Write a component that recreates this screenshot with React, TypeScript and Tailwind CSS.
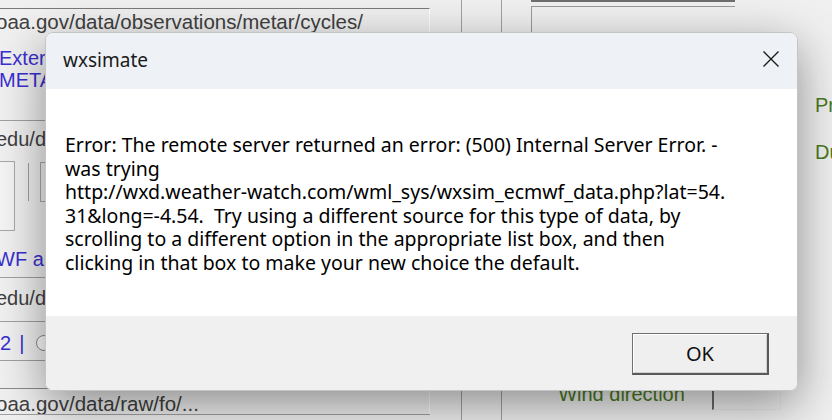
import React from "react";

function HLine({ className = "" }: { className?: string }) {
  return <div className={"h-px bg-[#a0a0a0] shrink-0 " + className} />;
}

export default function App() {
  const lines = [
    "Error: The remote server returned an error: (500) Internal Server Error. -",
    "was trying",
    "http://wxd.weather-watch.com/wml_sys/wxsim_ecmwf_data.php?lat=54.",
    "31&long=-4.54.  Try using a different source for this type of data, by",
    "scrolling to a different option in the appropriate list box, and then",
    "clicking in that box to make your new choice the default.",
  ];
  return (
    <div className="relative w-[832px] h-[420px] overflow-hidden bg-[#f0f0f0] font-['Liberation_Sans',Arial,sans-serif]">
      {/* background application */}
      <div className="flex h-full">
        {/* left column */}
        <div className="w-[430px] flex flex-col shrink-0">
          <div className="h-[8px] shrink-0" />
          <div className="h-[26px] shrink-0 border-t border-[#7a7a7a] border-r border-r-white flex items-center overflow-hidden">
            <span className="ml-[-4px] text-[20.5px] leading-[22px] text-[#404040] whitespace-nowrap">oaa.gov/data/observations/metar/cycles/</span>
          </div>
          <div className="h-[13px] shrink-0" />
          <div className="text-[20px] leading-[22px] text-[#3a2fd0] ml-[-1px] shrink-0">
            <div>Exter</div>
            <div>METAR</div>
          </div>
          <div className="h-[29px] shrink-0" />
          <HLine />
          <div className="h-[36px] shrink-0 flex items-center">
            <span className="ml-[-4px] text-[20px] leading-[22px] text-[#404040] whitespace-nowrap">edu/data</span>
          </div>
          <div className="h-[4px] shrink-0" />
          <div className="flex h-[74px] shrink-0">
            <div className="w-[15px] h-[70px] border border-[#a8a8a8] border-l-0 bg-[#f4f4f4]" />
            <div className="w-px h-[38px] bg-[#a0a0a0] ml-[13px] mt-[2px]" />
            <div className="w-[20px] h-[40px] border border-[#a8a8a8] ml-[11px] mt-[1px]" />
          </div>
          <div className="h-[13px] shrink-0" />
          <div className="text-[20px] leading-[22px] text-[#3a2fd0] ml-[-4px] whitespace-nowrap shrink-0">WF and</div>
          <div className="h-[7px] shrink-0" />
          <HLine />
          <div className="h-[43px] shrink-0 flex items-center pb-[4px]">
            <span className="ml-[-4px] text-[20px] leading-[22px] text-[#404040] whitespace-nowrap">edu/data</span>
          </div>
          <HLine />
          <div className="h-[38px] shrink-0 flex items-center gap-[8px] pt-[3px]">
            <span className="text-[20px] leading-[22px] text-[#3a2fd0]">2</span>
            <span className="text-[20px] leading-[22px] text-[#3a2fd0]">|</span>
            <span className="w-[16px] h-[16px] rounded-full border border-[#8a8a8a] bg-white ml-[4px]" />
          </div>
          <HLine />
          <div className="h-[27px] shrink-0" />
          <div className="h-px bg-[#8a8a8a] shrink-0" />
          <div className="h-[25px] shrink-0 flex items-center pt-[4px] border-r border-r-white">
            <span className="ml-[-4px] text-[20.5px] leading-[22px] text-[#404040] whitespace-nowrap">oaa.gov/data/raw/fo/...</span>
          </div>
          <HLine />
        </div>
        {/* middle columns */}
        <div className="w-[31px] shrink-0" />
        <div className="w-px h-full bg-[#a0a0a0] shrink-0" />
        <div className="w-[39px] shrink-0" />
        <div className="w-px h-full bg-[#a0a0a0] shrink-0" />
        <div className="w-[29px] shrink-0" />
        {/* central panel */}
        <div className="w-[270px] shrink-0 flex flex-col">
          <div className="flex">
            <div className="w-[204px] flex flex-col">
              <div className="h-[2px] bg-[#6e6e6e]" />
              <div className="h-[4px]" />
              <div className="h-[80px] border-l border-t border-[#9a9a9a]" />
            </div>
          </div>
          <div className="flex-1" />
          <div className="flex items-start h-[40px] shrink-0">
            <div className="w-[181px] text-center text-[20px] leading-[20px] text-[#4a7a1e] whitespace-nowrap mt-[4px]">Wind direction</div>
            <div className="w-[69px] h-[27px] mt-[3px] border-l-2 border-t-2 border-[#6a6a6a] border-r border-b border-r-[#e8e8e8] border-b-[#e8e8e8] bg-[#f0f0f0]" />
          </div>
        </div>
        {/* right column */}
        <div className="flex-1 flex flex-col pl-[14px]">
          <div className="h-[94px] shrink-0" />
          <div className="text-[20px] leading-[22px] text-[#4a7a1e]">Pr</div>
          <div className="h-[25px] shrink-0" />
          <div className="text-[20px] leading-[22px] text-[#4a7a1e]">Du</div>
        </div>
      </div>

      {/* dialog */}
      <div className="absolute left-[45px] top-[32px] w-[753px] h-[359px] rounded-[8px] overflow-hidden border border-[#c4c4c4] shadow-[0_14px_48px_rgba(0,0,0,0.42)] flex flex-col font-['Noto_Sans',sans-serif]">
        <div className="h-[56px] bg-[#eef1f6] flex items-center justify-between pl-[17px] pr-[17px] shrink-0">
          <span className="text-[19px] leading-[24px] text-[#1a1a1a] mt-[-2px]">wxsimate</span>
          <svg width="18" height="18" viewBox="0 0 18 18" className="mt-[-4px]">
            <path d="M1.5 1.5 L16.5 16.5 M16.5 1.5 L1.5 16.5" stroke="#1a1a1a" strokeWidth="1.4" fill="none" />
          </svg>
        </div>
        <div className="h-[227px] bg-white pt-[44px] pl-[19px] shrink-0">
          {lines.map((l, i) => (
            <div key={i} className="text-[19.5px] leading-[23.6px] text-black whitespace-pre">{l}</div>
          ))}
        </div>
        <div className="flex-1 bg-[#f0f0f0] flex justify-end items-start pt-[17px] pr-[28px]">
          <div className="w-[137px] h-[42px] border border-[#707070] border-r-2 border-b-2 border-r-[#5a5a5a] border-b-[#5a5a5a] bg-[#efefef] flex items-center justify-center">
            <div className="w-full h-full border border-white border-r-[#d0d0d0] border-b-[#d0d0d0] flex items-center justify-center">
              <span className="text-[20px] leading-[24px] text-[#111]">OK</span>
            </div>
          </div>
        </div>
      </div>
    </div>
  );
}
